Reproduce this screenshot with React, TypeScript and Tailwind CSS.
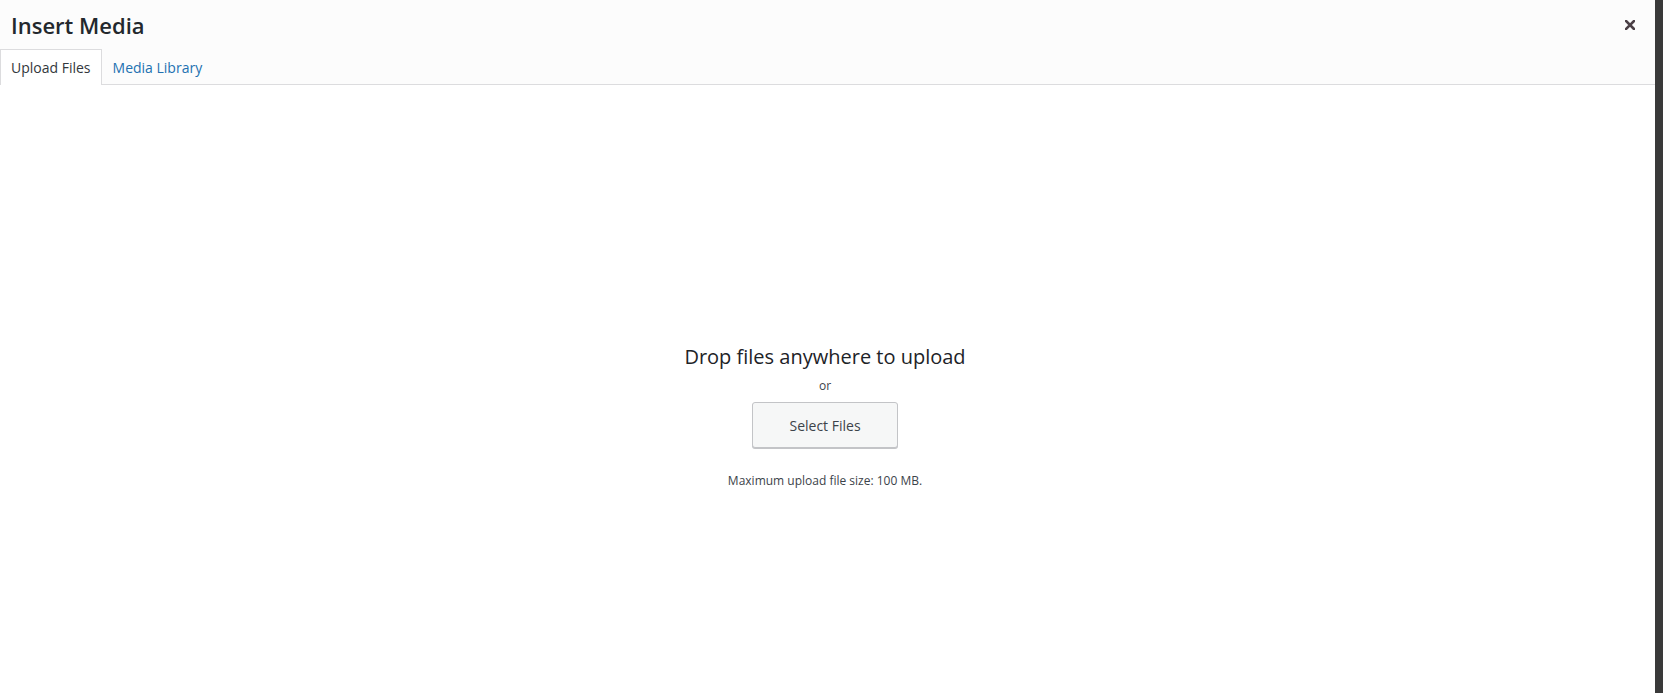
import React from 'react';

const font = { fontFamily: '"Open Sans", "Noto Sans", sans-serif' };

const CloseIcon = () => (
  <svg width="10" height="10" viewBox="0 0 10 10" aria-hidden="true">
    <path d="M1 1L9 9M9 1L1 9" stroke="#4b4046" strokeWidth="2.6" strokeLinecap="square" />
  </svg>
);

const tabs = [
  { label: 'Upload Files', active: true },
  { label: 'Media Library', active: false },
];

export default function App() {
  return (
    <div className="flex h-[693px] w-full overflow-hidden" style={font}>
      <div className="flex flex-1 flex-col bg-white">
        <div className="flex flex-col border-b border-[#dcdcde] bg-[#fcfcfc]">
          <div className="flex h-[49px] items-center justify-between">
            <h1 className="pl-[11px] pt-[1px] text-[22px] leading-[49px] font-semibold text-[#23282d]">
              Insert Media
            </h1>
            <button className="mr-[15px] mt-[1px] flex h-[20px] w-[20px] items-center justify-center">
              <CloseIcon />
            </button>
          </div>
          <div className="flex h-[35px] items-stretch">
            {tabs.map((t) => (
              <a
                key={t.label}
                href="#"
                className={
                  t.active
                    ? '-mb-px flex items-center border border-b-0 border-[#dcdcde] bg-white px-[10px] text-[14px] text-[#32373c]'
                    : '-mb-px flex items-center border border-transparent px-[10px] text-[14px] text-[#2271b1]'
                }
              >
                {t.label}
              </a>
            ))}
          </div>
        </div>
        <div className="flex flex-1 flex-col items-center pr-[5px] pt-[258px]">
          <h2 className="text-[20px] leading-[28px] text-[#1d2327]">Drop files anywhere to upload</h2>
          <p className="mt-[7px] text-[12px] leading-[16px] text-[#3c434a]">or</p>
          <button className="mt-[8px] h-[46px] w-[146px] rounded-[3px] border border-[#c3c4c7] bg-[#f6f7f7] text-[14px] text-[#3c434a] shadow-[0_1px_0_#c3c4c7]">
            Select Files
          </button>
          <p className="mt-[25px] text-[12px] leading-[16px] text-[#3c434a]">
            Maximum upload file size: 100 MB.
          </p>
        </div>
      </div>
      <div className="w-[8px] bg-[#3a3a3a]" />
    </div>
  );
}
